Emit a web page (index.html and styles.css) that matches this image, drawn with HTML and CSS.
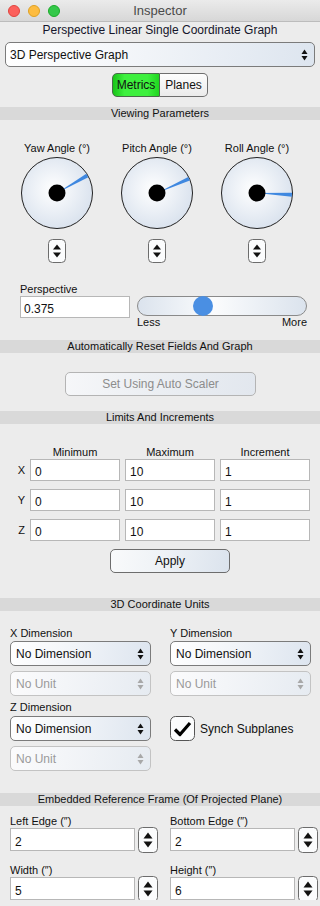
FILE: index.html
```html
<!DOCTYPE html>
<html lang="en">
<head>
    <meta charset="UTF-8">
    <meta name="viewport" content="width=device-width, initial-scale=1.0">
    <title>Inspector</title>
    <link rel="stylesheet" href="styles.css">
</head>
<body>
    <div class="titlebar">
        <div class="lights">
            <span class="light close"></span>
            <span class="light minimize"></span>
            <span class="light zoom"></span>
        </div>
        <div class="title">Inspector</div>
    </div>

    <div class="graph-name">Perspective Linear Single Coordinate Graph</div>

    <div class="popup popup-wide">
        <span>3D Perspective Graph</span>
        <svg class="arrows" width="7" height="12" viewBox="0 0 7 12"><polygon points="0.5,5 3.5,0.5 6.5,5"/><polygon points="0.5,7 3.5,11.5 6.5,7"/></svg>
    </div>

    <div class="segmented">
        <span class="seg on">Metrics</span>
        <span class="seg">Planes</span>
    </div>

    <div class="section-head section-first">Viewing Parameters</div>

    <div class="dials">
        <div class="dial-col">
            <div class="dial-label">Yaw Angle (°)</div>
            <svg class="dial" width="72" height="72" viewBox="0 0 72 72">
                <defs><radialGradient id="face" cx="0.45" cy="0.45" r="0.6"><stop offset="0" stop-color="#ffffff"/><stop offset="1" stop-color="#d8e1ed"/></radialGradient></defs>
                <circle cx="36" cy="36" r="35.5" fill="url(#face)" stroke="#222"/>
                <polygon points="36,36 67.3,20.2 65.3,16.8" fill="#3f88e0"/>
                <circle cx="36" cy="36" r="8.5" fill="#000"/>
            </svg>
            <div class="stepper">
                <svg width="18" height="24" viewBox="0 0 18 24"><rect x="0.5" y="0.5" width="17" height="23" rx="4" fill="#fbfcfd" stroke="#6c6c6c"/><polygon points="5,10.5 9,5.5 13,10.5"/><polygon points="5,13.5 9,18.5 13,13.5"/></svg>
            </div>
        </div>
        <div class="dial-col">
            <div class="dial-label">Pitch Angle (°)</div>
            <svg class="dial" width="72" height="72" viewBox="0 0 72 72">
                <circle cx="36" cy="36" r="35.5" fill="url(#face)" stroke="#222"/>
                <polygon points="36,36 68.8,23.6 67.2,19.9" fill="#3f88e0"/>
                <circle cx="36" cy="36" r="8.5" fill="#000"/>
            </svg>
            <div class="stepper">
                <svg width="18" height="24" viewBox="0 0 18 24"><rect x="0.5" y="0.5" width="17" height="23" rx="4" fill="#fbfcfd" stroke="#6c6c6c"/><polygon points="5,10.5 9,5.5 13,10.5"/><polygon points="5,13.5 9,18.5 13,13.5"/></svg>
            </div>
        </div>
        <div class="dial-col">
            <div class="dial-label">Roll Angle (°)</div>
            <svg class="dial" width="72" height="72" viewBox="0 0 72 72">
                <circle cx="36" cy="36" r="35.5" fill="url(#face)" stroke="#222"/>
                <polygon points="36,36 70.85,39.8 71.05,35.8" fill="#3f88e0"/>
                <circle cx="36" cy="36" r="8.5" fill="#000"/>
            </svg>
            <div class="stepper">
                <svg width="18" height="24" viewBox="0 0 18 24"><rect x="0.5" y="0.5" width="17" height="23" rx="4" fill="#fbfcfd" stroke="#6c6c6c"/><polygon points="5,10.5 9,5.5 13,10.5"/><polygon points="5,13.5 9,18.5 13,13.5"/></svg>
            </div>
        </div>
    </div>

    <div class="perspective">
        <div class="field-label">Perspective</div>
        <div class="perspective-row">
            <div class="text-field persp-field">0.375</div>
            <div class="slider">
                <div class="track"><span class="knob"></span></div>
                <div class="scale"><span>Less</span><span>More</span></div>
            </div>
        </div>
    </div>

    <div class="section-head section-auto">Automatically Reset Fields And Graph</div>

    <div class="push auto-btn">Set Using Auto Scaler</div>

    <div class="section-head section-limits">Limits And Increments</div>

    <div class="limits">
        <div class="limit-row">
            <span></span>
            <span class="limit-head">Minimum</span>
            <span class="limit-head">Maximum</span>
            <span class="limit-head">Increment</span>
        </div>
        <div class="limit-row">
            <span class="axis">X</span>
            <div class="text-field">0</div>
            <div class="text-field">10</div>
            <div class="text-field">1</div>
        </div>
        <div class="limit-row spaced">
            <span class="axis">Y</span>
            <div class="text-field">0</div>
            <div class="text-field">10</div>
            <div class="text-field">1</div>
        </div>
        <div class="limit-row spaced">
            <span class="axis">Z</span>
            <div class="text-field">0</div>
            <div class="text-field">10</div>
            <div class="text-field">1</div>
        </div>
    </div>

    <div class="push apply-btn">Apply</div>

    <div class="section-head section-units">3D Coordinate Units</div>

    <div class="units">
        <div class="unit-col">
            <div class="field-label">X Dimension</div>
            <div class="popup dim">
                <span>No Dimension</span>
                <svg class="arrows" width="7" height="12" viewBox="0 0 7 12"><polygon points="0.5,5 3.5,0.5 6.5,5"/><polygon points="0.5,7 3.5,11.5 6.5,7"/></svg>
            </div>
            <div class="popup unit disabled">
                <span>No Unit</span>
                <svg class="arrows" width="7" height="12" viewBox="0 0 7 12"><polygon points="0.5,5 3.5,0.5 6.5,5"/><polygon points="0.5,7 3.5,11.5 6.5,7"/></svg>
            </div>
            <div class="field-label z-label">Z Dimension</div>
            <div class="popup dim z-popup">
                <span>No Dimension</span>
                <svg class="arrows" width="7" height="12" viewBox="0 0 7 12"><polygon points="0.5,5 3.5,0.5 6.5,5"/><polygon points="0.5,7 3.5,11.5 6.5,7"/></svg>
            </div>
            <div class="popup unit disabled">
                <span>No Unit</span>
                <svg class="arrows" width="7" height="12" viewBox="0 0 7 12"><polygon points="0.5,5 3.5,0.5 6.5,5"/><polygon points="0.5,7 3.5,11.5 6.5,7"/></svg>
            </div>
        </div>
        <div class="unit-col">
            <div class="field-label">Y Dimension</div>
            <div class="popup dim">
                <span>No Dimension</span>
                <svg class="arrows" width="7" height="12" viewBox="0 0 7 12"><polygon points="0.5,5 3.5,0.5 6.5,5"/><polygon points="0.5,7 3.5,11.5 6.5,7"/></svg>
            </div>
            <div class="popup unit disabled">
                <span>No Unit</span>
                <svg class="arrows" width="7" height="12" viewBox="0 0 7 12"><polygon points="0.5,5 3.5,0.5 6.5,5"/><polygon points="0.5,7 3.5,11.5 6.5,7"/></svg>
            </div>
            <div class="check-row">
                <svg width="25" height="25" viewBox="0 0 25 25"><rect x="0.5" y="0.5" width="24" height="24" rx="5" fill="#fbfcfd" stroke="#555"/><path d="M5 13.5 L10 18.5 L20 7" fill="none" stroke="#000" stroke-width="3.2" stroke-linejoin="round"/></svg>
                <span>Synch Subplanes</span>
            </div>
        </div>
    </div>

    <div class="section-head section-frame">Embedded Reference Frame (Of Projected Plane)</div>

    <div class="frame">
        <div class="frame-col">
            <div class="field-label">Left Edge (″)</div>
            <div class="frame-row">
                <div class="text-field">2</div>
                <div class="stepper big">
                    <svg width="20" height="26" viewBox="0 0 20 26"><rect x="0.5" y="0.5" width="19" height="25" rx="4" fill="#fbfcfd" stroke="#6c6c6c"/><polygon points="5.5,11.5 10,5.5 14.5,11.5"/><polygon points="5.5,14.5 10,20.5 14.5,14.5"/></svg>
                </div>
            </div>
            <div class="field-label second">Width (″)</div>
            <div class="frame-row">
                <div class="text-field">5</div>
                <div class="stepper big">
                    <svg width="20" height="26" viewBox="0 0 20 26"><rect x="0.5" y="0.5" width="19" height="25" rx="4" fill="#fbfcfd" stroke="#6c6c6c"/><polygon points="5.5,11.5 10,5.5 14.5,11.5"/><polygon points="5.5,14.5 10,20.5 14.5,14.5"/></svg>
                </div>
            </div>
        </div>
        <div class="frame-col">
            <div class="field-label">Bottom Edge (″)</div>
            <div class="frame-row">
                <div class="text-field">2</div>
                <div class="stepper big">
                    <svg width="20" height="26" viewBox="0 0 20 26"><rect x="0.5" y="0.5" width="19" height="25" rx="4" fill="#fbfcfd" stroke="#6c6c6c"/><polygon points="5.5,11.5 10,5.5 14.5,11.5"/><polygon points="5.5,14.5 10,20.5 14.5,14.5"/></svg>
                </div>
            </div>
            <div class="field-label second">Height (″)</div>
            <div class="frame-row">
                <div class="text-field">6</div>
                <div class="stepper big">
                    <svg width="20" height="26" viewBox="0 0 20 26"><rect x="0.5" y="0.5" width="19" height="25" rx="4" fill="#fbfcfd" stroke="#6c6c6c"/><polygon points="5.5,11.5 10,5.5 14.5,11.5"/><polygon points="5.5,14.5 10,20.5 14.5,14.5"/></svg>
                </div>
            </div>
        </div>
    </div>
</body>
</html>
```

FILE: styles.css
```css
* {
    margin: 0;
    padding: 0;
    box-sizing: border-box;
}

body {
    font-family: "Liberation Sans", Arial, sans-serif;
    background: #ececec;
    color: #111;
    width: 320px;
    overflow: hidden;
}

/* window chrome */
.titlebar {
    height: 22px;
    display: grid;
    grid-template-columns: 1fr auto 1fr;
    align-items: center;
    background: linear-gradient(#ebebeb, #d7d7d7);
    border-bottom: 1px solid #bcbcbc;
}

.lights {
    display: flex;
    gap: 8px;
    padding-left: 8px;
}

.light {
    width: 12px;
    height: 12px;
    border-radius: 50%;
}

.close { background: #fc605c; border: 1px solid #e0443e; }
.minimize { background: #fdbc40; border: 1px solid #dea123; }
.zoom { background: #34c84a; border: 1px solid #1aab29; }

.title {
    font-size: 13px;
    color: #4a4a4a;
}

.graph-name {
    font-size: 12px;
    line-height: 16px;
    text-align: center;
    color: #15152a;
}

/* popups */
.popup {
    display: flex;
    align-items: center;
    justify-content: space-between;
    height: 25px;
    padding: 0 6px 0 5px;
    border: 1px solid #7b7b7b;
    border-radius: 5px;
    background: linear-gradient(100deg, #ffffff 0%, #f5f7fa 35%, #dde5ef 100%);
    font-size: 12px;
}

.popup-wide {
    margin: 4px 5px 0;
    padding-left: 4px;
}

.arrows polygon {
    fill: #111;
}

.popup.disabled {
    border-color: #c3c3c3;
    background: linear-gradient(100deg, #fbfbfc 0%, #f3f5f8 40%, #e6ebf1 100%);
    color: #9a9a9a;
}

.popup.disabled .arrows polygon {
    fill: #a8a8a8;
}

/* segmented control */
.segmented {
    display: flex;
    justify-content: center;
    margin-top: 6px;
}

.seg {
    width: 48px;
    height: 24px;
    display: flex;
    align-items: center;
    justify-content: center;
    font-size: 12px;
    border: 1px solid #6e6e6e;
    background: linear-gradient(#fdfdfd, #ebebeb);
}

.seg:first-child {
    border-radius: 5px 0 0 5px;
}

.seg:last-child {
    border-radius: 0 5px 5px 0;
    border-left: none;
}

.seg.on {
    background: linear-gradient(to right, #18c418, #3ef03e 25%, #3ef03e 75%, #1fd51f);
    border-color: #4a6a4a;
}

/* section bands */
.section-head {
    height: 13px;
    line-height: 13px;
    background: #d9d9d9;
    font-size: 11px;
    text-align: center;
}

.section-first { margin-top: 10px; }
.section-auto { margin-top: 12px; }
.section-limits { margin-top: 15px; }
.section-units { margin-top: 25px; }
.section-frame { margin-top: 22px; }

/* dials */
.dials {
    display: flex;
    padding-left: 7px;
    margin-top: 21px;
}

.dial-col {
    width: 100px;
    display: flex;
    flex-direction: column;
    align-items: center;
}

.dial-label {
    font-size: 11px;
    line-height: 14px;
}

.dial {
    display: block;
    margin-top: 2px;
}

.stepper {
    margin-top: 10px;
    line-height: 0;
}

.stepper polygon {
    fill: #111;
}

/* perspective */
.perspective {
    margin-top: 19px;
    padding-left: 20px;
}

.field-label {
    font-size: 11px;
    line-height: 14px;
}

.perspective-row {
    display: flex;
    gap: 7px;
}

.text-field {
    height: 22px;
    border: 1px solid #b7b7b7;
    background: #fff;
    font-size: 12px;
    line-height: 14px;
    padding: 5px 4px 0;
}

.persp-field {
    width: 110px;
    padding-left: 3px;
}

.slider {
    width: 170px;
}

.track {
    position: relative;
    height: 20px;
    border: 1px solid #8a8a8a;
    border-radius: 10px;
    background: linear-gradient(to right, #dbe3ed, #fbfcfd 45%, #dbe3ed);
}

.knob {
    position: absolute;
    left: 55px;
    top: -1px;
    width: 20px;
    height: 20px;
    border-radius: 50%;
    background: #4a8fe3;
}

.scale {
    display: flex;
    justify-content: space-between;
    font-size: 11px;
    line-height: 12px;
}

/* buttons */
.push {
    height: 24px;
    display: flex;
    align-items: center;
    justify-content: center;
    border: 1px solid #6d6d6d;
    border-radius: 5px;
    background: linear-gradient(100deg, #f9fafb 0%, #eef2f6 45%, #dbe3ed 100%);
    font-size: 12px;
}

.auto-btn {
    width: 191px;
    margin: 19px 0 0 65px;
    border-color: #b4b4b4;
    color: #8c8c8c;
    background: linear-gradient(100deg, #f6f7f9 0%, #eceff3 45%, #e2e7ee 100%);
}

.apply-btn {
    width: 120px;
    margin: 8px 0 0 110px;
}

/* limits grid */
.limits {
    margin-top: 21px;
    padding-left: 10px;
}

.limit-row {
    display: grid;
    grid-template-columns: 15px 90px 90px 90px;
    column-gap: 5px;
    align-items: center;
}

.limit-row.spaced {
    margin-top: 8px;
}

.limit-head {
    font-size: 11px;
    line-height: 14px;
    text-align: center;
}

.axis {
    font-size: 11px;
    text-align: right;
}

/* units */
.units {
    display: flex;
    gap: 19px;
    margin-top: 15px;
    padding-left: 10px;
}

.unit-col {
    width: 141px;
    display: flex;
    flex-direction: column;
}

.popup.dim {
    margin-top: 1px;
}

.popup.unit {
    margin-top: 5px;
}

.z-label {
    margin-top: 4px;
}

.popup.dim.z-popup {
    margin-top: 2px;
}

.check-row {
    display: flex;
    align-items: center;
    gap: 5px;
    margin-top: 20px;
    font-size: 12px;
}

.check-row svg {
    display: block;
}

/* reference frame */
.frame {
    display: flex;
    gap: 12px;
    margin-top: 8px;
    padding-left: 10px;
}

.frame-col {
    width: 148px;
}

.frame-row {
    display: flex;
    align-items: center;
    gap: 3px;
    height: 23px;
}

.frame-row .text-field {
    width: 125px;
    height: 23px;
    padding-top: 6px;
}

.stepper.big {
    margin-top: 0;
}

.field-label.second {
    margin-top: 12px;
}
```
